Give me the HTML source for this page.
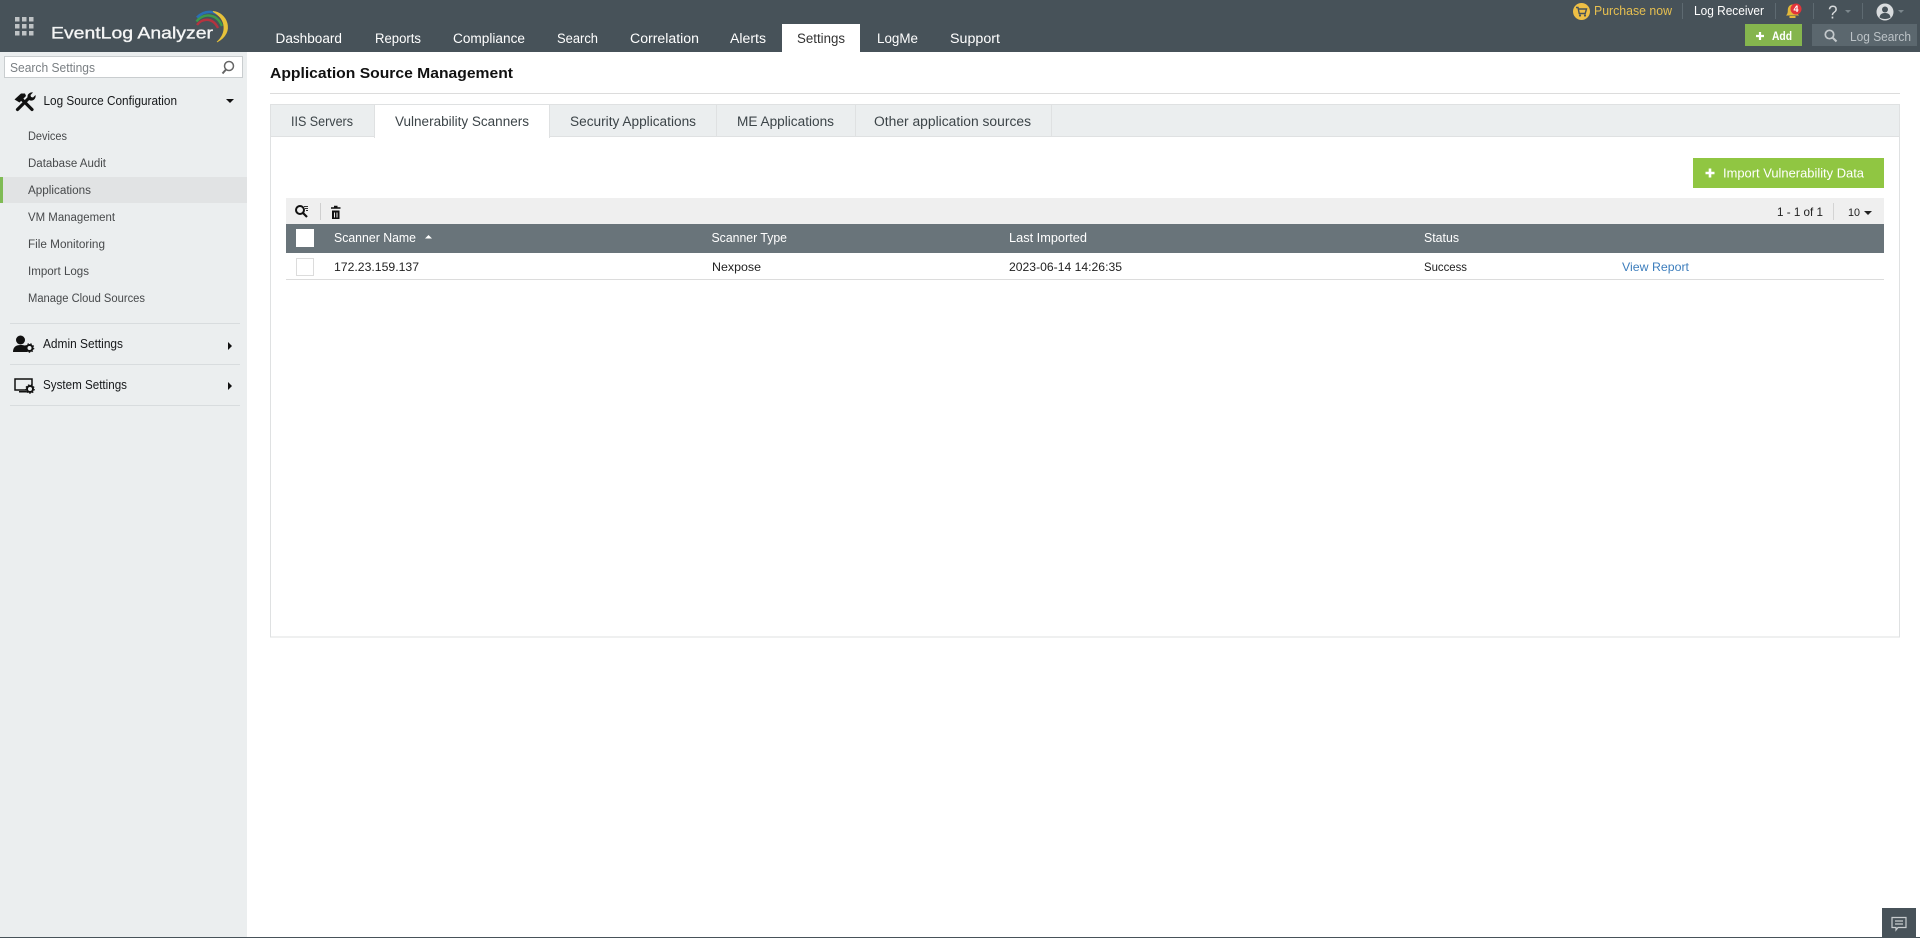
<!DOCTYPE html>
<html><head><meta charset="utf-8"><title>Application Source Management</title>
<style>
html,body{margin:0;padding:0;background:#fff;width:1920px;height:938px;overflow:hidden}
svg{display:block}
text{font-family:"Liberation Sans",Arial,sans-serif;font-size:13px;white-space:pre}
.n{font-size:13.5px;fill:#fff}
.t{font-size:13.5px;fill:#3c4448}
.s{font-size:11.5px;fill:#47494b}
.m{font-size:12.5px;fill:#17191b}
.h{font-size:12.5px;fill:#fff}
.c{font-size:12px;fill:#222}
</style></head><body>
<svg width="1920" height="938" viewBox="0 0 1920 938" xmlns="http://www.w3.org/2000/svg">
<rect width="1920" height="938" fill="#fff"/>
<!-- header -->
<rect width="1920" height="52" fill="#475259"/>
<g fill="#bfc3c5">
<rect x="15" y="17" width="4.500" height="4.500"/><rect x="22" y="17" width="4.500" height="4.500"/><rect x="29" y="17" width="4.500" height="4.500"/>
<rect x="15" y="24" width="4.500" height="4.500"/><rect x="22" y="24" width="4.500" height="4.500"/><rect x="29" y="24" width="4.500" height="4.500"/>
<rect x="15" y="31" width="4.500" height="4.500"/><rect x="22" y="31" width="4.500" height="4.500"/><rect x="29" y="31" width="4.500" height="4.500"/>
</g>
<text x="51" y="38.500" style="font-size:17px;fill:#f4f5f5;stroke:#f4f5f5;stroke-width:.35px" textLength="162" lengthAdjust="spacingAndGlyphs">EventLog Analyzer</text>
<path d="M197 25C201 19 212 16 218 28" fill="none" stroke="#b5333f" stroke-width="2.400"/>
<path d="M196.500 21.500C202 13.500 216 12 222 26" fill="none" stroke="#3d9a4b" stroke-width="2.400"/>
<path d="M197 17.500C205 9.500 219 9 226 24" fill="none" stroke="#2a6fb5" stroke-width="2.600"/>
<path d="M213 11.500C226 12 236 32 217 42C226 34 228 20 213 11.500Z" fill="#e8c23a" stroke="#e8c23a" stroke-width=".8"/>
<g>
<text class="n" x="275.500" y="43" textLength="66.500" lengthAdjust="spacingAndGlyphs">Dashboard</text>
<text class="n" x="375" y="43" textLength="46" lengthAdjust="spacingAndGlyphs">Reports</text>
<text class="n" x="453" y="43" textLength="72" lengthAdjust="spacingAndGlyphs">Compliance</text>
<text class="n" x="557" y="43" textLength="41" lengthAdjust="spacingAndGlyphs">Search</text>
<text class="n" x="630" y="43" textLength="69" lengthAdjust="spacingAndGlyphs">Correlation</text>
<text class="n" x="730" y="43" textLength="36" lengthAdjust="spacingAndGlyphs">Alerts</text>
<rect x="782" y="24" width="78" height="28" fill="#fff"/>
<text class="n" x="797" y="43" textLength="48" lengthAdjust="spacingAndGlyphs" style="fill:#333">Settings</text>
<text class="n" x="877" y="43" textLength="41" lengthAdjust="spacingAndGlyphs">LogMe</text>
<text class="n" x="950" y="43" textLength="50" lengthAdjust="spacingAndGlyphs">Support</text>
</g>
<!-- top right -->
<circle cx="1581.500" cy="11.500" r="8.500" fill="#eebf45"/>
<path d="M1576 7.500h2l1.200 6h6l1.300-4.500h-8" fill="none" stroke="#47525a" stroke-width="1.400"/>
<circle cx="1580" cy="15.500" r="1.100" fill="#47525a"/><circle cx="1585" cy="15.500" r="1.100" fill="#47525a"/>
<text x="1594" y="15" fill="#e6bf50" textLength="78" lengthAdjust="spacingAndGlyphs">Purchase now</text>
<rect x="1682" y="3" width="1" height="16" fill="#5e6a71"/>
<text x="1694" y="15" fill="#fff" textLength="70" lengthAdjust="spacingAndGlyphs">Log Receiver</text>
<rect x="1775" y="3" width="1" height="16" fill="#5e6a71"/>
<path d="M1786 15.500c1.500-1.500 1.800-3 1.800-5.500 0-3 2-5.500 4.700-5.500s4.700 2.500 4.700 5.500c0 2.500.3 4 1.800 5.500z" fill="#e3b93a"/>
<rect x="1789.500" y="16" width="6" height="2" fill="#e3b93a"/>
<circle cx="1796" cy="9" r="5.500" fill="#e2343a"/>
<text x="1793.500" y="12" fill="#fff" style="font-size:9px;font-weight:bold">4</text>
<rect x="1813" y="3" width="1" height="16" fill="#5e6a71"/>
<text x="1828" y="18.500" fill="#d8dbdd" style="font-size:18px" textLength="9.500" lengthAdjust="spacingAndGlyphs">?</text>
<path d="M1845 10h6l-3 3z" fill="#7c878d"/>
<rect x="1862" y="3" width="1" height="16" fill="#5e6a71"/>
<circle cx="1885" cy="12" r="8.500" fill="#d9dcde"/>
<circle cx="1885" cy="9.500" r="3" fill="#475259"/>
<path d="M1879.500 17.500c.5-3.500 2.500-4.500 5.500-4.500s5 1 5.500 4.500c-3 2-8 2-11 0z" fill="#475259"/>
<path d="M1898 10h6l-3 3z" fill="#7c878d"/>
<rect x="1745" y="24" width="57" height="22" fill="#85b54e"/>
<path d="M1760 32v8M1756 36h8" stroke="#fff" stroke-width="2.200"/>
<text x="1772" y="40" fill="#fff" style="font-size:12px;font-weight:bold" textLength="20" lengthAdjust="spacingAndGlyphs">Add</text>
<rect x="1812" y="24" width="105" height="22" fill="#5b676e"/>
<circle cx="1829.500" cy="34.500" r="4.200" fill="none" stroke="#c4c9cc" stroke-width="1.700"/>
<path d="M1832.500 37.500l4 4" stroke="#c4c9cc" stroke-width="2"/>
<text x="1850" y="41" fill="#bcc3c7" textLength="61" lengthAdjust="spacingAndGlyphs">Log Search</text>
<!-- sidebar -->
<rect y="52" width="247" height="886" fill="#ebeeef"/>
<rect x="4.500" y="56.500" width="238" height="21" fill="#fff" stroke="#c9cdcf"/>
<text x="10" y="72" fill="#7a7f83" textLength="85" lengthAdjust="spacingAndGlyphs">Search Settings</text>
<circle cx="229" cy="66" r="4.500" fill="none" stroke="#666" stroke-width="1.500"/>
<path d="M226 69.500l-3.500 4" stroke="#666" stroke-width="2"/>
<path d="M14.500 99.500L21 93.500h4l1 2.500-6.500 6.500z" fill="#111"/>
<path d="M21 98.500L32 109.500" stroke="#111" stroke-width="3.200" stroke-linecap="round"/>
<path d="M17.500 109.500L28.500 98.500" stroke="#111" stroke-width="3.200" stroke-linecap="round"/>
<path d="M28 94.500c1.500-2 3.500-2.500 5-2l-2.500 2.500.5 2 2 .5 2.500-2.500c.5 2-.5 4-2 5-1.500.8-3 .8-4.500 0-1.500-1.500-2-3.500-1-5.500z" fill="#111"/>
<text x="43.500" y="105" class="m" textLength="133.500" lengthAdjust="spacingAndGlyphs">Log Source Configuration</text>
<path d="M226 99h8l-4 4z" fill="#111"/>
<text class="s" x="28" y="140" textLength="39" lengthAdjust="spacingAndGlyphs">Devices</text>
<text class="s" x="28" y="167" textLength="78" lengthAdjust="spacingAndGlyphs">Database Audit</text>
<rect y="177" width="247" height="26" fill="#e1e3e4"/>
<rect y="177" width="3" height="26" fill="#7fbb55"/>
<text class="s" x="28" y="194" textLength="63" lengthAdjust="spacingAndGlyphs">Applications</text>
<text class="s" x="28" y="221" textLength="87" lengthAdjust="spacingAndGlyphs">VM Management</text>
<text class="s" x="28" y="248" textLength="77" lengthAdjust="spacingAndGlyphs">File Monitoring</text>
<text class="s" x="28" y="275" textLength="61" lengthAdjust="spacingAndGlyphs">Import Logs</text>
<text class="s" x="28" y="302" textLength="117" lengthAdjust="spacingAndGlyphs">Manage Cloud Sources</text>
<rect x="10" y="323" width="230" height="1" fill="#d8dcde"/>
<rect x="10" y="364" width="230" height="1" fill="#d8dcde"/>
<rect x="10" y="405" width="230" height="1" fill="#d8dcde"/>
<circle cx="20.500" cy="340" r="4.500" fill="#111"/>
<path d="M13 352c0-5 3-7 7.500-7s6 1 7 3v4z" fill="#111"/>
<circle cx="29.500" cy="348" r="3" fill="none" stroke="#111" stroke-width="2"/>
<circle cx="29.500" cy="348" r="4.300" fill="none" stroke="#111" stroke-width="1" stroke-dasharray="1.500 1.500"/>
<text x="43" y="348" class="m" textLength="80" lengthAdjust="spacingAndGlyphs">Admin Settings</text>
<path d="M228 342v8l4-4z" fill="#111"/>
<rect x="15" y="379" width="17" height="11" fill="none" stroke="#111" stroke-width="1.500"/>
<rect x="19" y="391" width="8" height="1.500" fill="#111"/>
<circle cx="30" cy="389" r="4" fill="#ebeeef"/>
<circle cx="30" cy="389" r="3" fill="none" stroke="#111" stroke-width="2"/>
<circle cx="30" cy="389" r="4.300" fill="none" stroke="#111" stroke-width="1" stroke-dasharray="1.500 1.500"/>
<text x="43" y="389" class="m" textLength="84" lengthAdjust="spacingAndGlyphs">System Settings</text>
<path d="M228 382v8l4-4z" fill="#111"/>
<!-- main -->
<text x="270" y="78" fill="#111" style="font-size:15px;font-weight:bold" textLength="243" lengthAdjust="spacingAndGlyphs">Application Source Management</text>
<rect x="270" y="93" width="1630" height="1" fill="#dcdcdc"/>
<rect x="270.500" y="104.500" width="1629" height="532.500" fill="#fff" stroke="#dfe1e2"/>
<rect x="271" y="105" width="1628" height="32" fill="#ebeeef"/>
<rect x="270" y="104" width="1630" height="1" fill="#dfe1e2"/>
<rect x="270" y="136" width="1630" height="1" fill="#dfe1e2"/>
<rect x="374" y="105" width="176" height="33" fill="#fff"/>
<rect x="374" y="105" width="1" height="33" fill="#dfe1e2"/>
<rect x="549" y="105" width="1" height="33" fill="#dfe1e2"/>
<rect x="716" y="105" width="1" height="32" fill="#dfe1e2"/>
<rect x="855" y="105" width="1" height="32" fill="#dfe1e2"/>
<rect x="1051" y="105" width="1" height="32" fill="#dfe1e2"/>
<text class="t" x="291" y="126" textLength="62" lengthAdjust="spacingAndGlyphs">IIS Servers</text>
<text class="t" x="395" y="126" textLength="134" lengthAdjust="spacingAndGlyphs">Vulnerability Scanners</text>
<text class="t" x="570" y="126" textLength="126" lengthAdjust="spacingAndGlyphs">Security Applications</text>
<text class="t" x="737" y="126" textLength="97" lengthAdjust="spacingAndGlyphs">ME Applications</text>
<text class="t" x="874" y="126" textLength="157" lengthAdjust="spacingAndGlyphs">Other application sources</text>
<rect x="1693" y="158" width="191" height="30" fill="#90c642"/>
<path d="M1710 168.500v9M1705.500 173h9" stroke="#fff" stroke-width="2.600"/>
<text x="1723" y="177.500" fill="#fff" style="font-size:12.500px" textLength="141" lengthAdjust="spacingAndGlyphs">Import Vulnerability Data</text>
<rect x="286" y="198" width="1598" height="26" fill="#efefef"/>
<circle cx="300" cy="210" r="4" fill="none" stroke="#111" stroke-width="2"/>
<path d="M303 213l4 4" stroke="#111" stroke-width="2.200"/>
<path d="M304 206.500h4M305 208.500h3M306 210.500h2" stroke="#333" stroke-width=".9"/>
<rect x="320" y="203" width="1" height="17" fill="#cfcfcf"/>
<path d="M332 210.500h7.500v8.500h-7.500z" fill="#111"/>
<path d="M331 208h9.500M334 206.500h3.500" stroke="#111" stroke-width="1.500"/>
<path d="M334.500 212.500v5M337 212.500v5" stroke="#efefef" stroke-width="1"/>
<text class="c" x="1777" y="216" textLength="46" lengthAdjust="spacingAndGlyphs">1 - 1 of 1</text>
<rect x="1833" y="203" width="1" height="17" fill="#d4d4d4"/>
<text x="1848" y="216" fill="#222" style="font-size:11px" textLength="12" lengthAdjust="spacingAndGlyphs">10</text>
<path d="M1864 211h8l-4 4z" fill="#222"/>
<rect x="286" y="224" width="1598" height="29" fill="#69747a"/>
<rect x="296" y="229" width="18" height="18" fill="#fff"/>
<text class="h" x="334" y="242" textLength="82" lengthAdjust="spacingAndGlyphs">Scanner Name</text>
<path d="M425 238.500h7l-3.500-3.500z" fill="#fff"/>
<text class="h" x="711.500" y="242" textLength="75.500" lengthAdjust="spacingAndGlyphs">Scanner Type</text>
<text class="h" x="1009" y="242" textLength="78" lengthAdjust="spacingAndGlyphs">Last Imported</text>
<text class="h" x="1424" y="242" textLength="35" lengthAdjust="spacingAndGlyphs">Status</text>
<rect x="296.500" y="258.500" width="17" height="17" fill="#fff" stroke="#dcdcdc"/>
<text class="c" x="334" y="271" textLength="85" lengthAdjust="spacingAndGlyphs">172.23.159.137</text>
<text class="c" x="712" y="271" textLength="49" lengthAdjust="spacingAndGlyphs">Nexpose</text>
<text class="c" x="1009" y="271" textLength="113" lengthAdjust="spacingAndGlyphs">2023-06-14 14:26:35</text>
<text class="c" x="1424" y="271" textLength="43" lengthAdjust="spacingAndGlyphs">Success</text>
<text class="c" x="1622" y="271" style="fill:#3d7ebd" textLength="67" lengthAdjust="spacingAndGlyphs">View Report</text>
<rect x="286" y="279" width="1598" height="1" fill="#dcdcdc"/>
<!-- chat -->
<rect x="1882" y="908" width="34" height="30" fill="#475259"/>
<path d="M1892 917.500h14v10h-8l-2 2.500v-2.500h-4z" fill="none" stroke="#c9cdcf" stroke-width="1.200"/>
<path d="M1895 921h8M1895 924h8" stroke="#c9cdcf" stroke-width="1.200"/>
<rect y="937" width="1920" height="1" fill="#475259"/>
</svg>
</body></html>
